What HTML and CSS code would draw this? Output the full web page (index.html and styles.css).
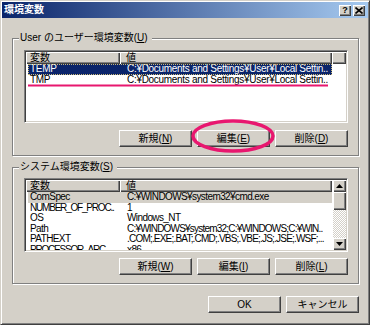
FILE: index.html
```html
<!DOCTYPE html>
<html lang="ja">
<head>
  <meta charset="UTF-8">
  <title>環境変数</title>
  <link rel="stylesheet" href="styles.css">
</head>
<body>
  <div class="window">
    <div class="titlebar">
      <span class="title">環境変数</span>
      <div class="title-btns">
        <span class="tbtn">?</span>
        <span class="tbtn">
          <svg width="8" height="7" viewBox="0 0 8 7"><path d="M0.5 0.5 L7.5 6.5 M7.5 0.5 L0.5 6.5" stroke="#000" stroke-width="1.6"/></svg>
        </span>
      </div>
    </div>

    <div class="dialog">
      <!-- ユーザー環境変数 -->
      <fieldset class="group group-user">
        <legend>User のユーザー環境変数(<u>U</u>)</legend>
        <div class="listview lv-user">
          <div class="lv-main">
            <div class="lv-head">
              <span class="hcol hcol1">変数</span>
              <span class="hcol hcol2">値</span>
              <span class="hcol hfill"></span>
            </div>
            <div class="row selected"><span>TEMP</span><span>C:¥Documents and Settings¥User¥Local Settin..</span></div>
            <div class="row"><span>TMP</span><span>C:¥Documents and Settings¥User¥Local Settin..</span></div>
          </div>
        </div>
        <div class="btn-row">
          <button class="btn">新規(<u>N</u>)</button>
          <button class="btn">編集(<u>E</u>)</button>
          <button class="btn">削除(<u>D</u>)</button>
        </div>
      </fieldset>

      <!-- システム環境変数 -->
      <fieldset class="group group-sys">
        <legend>システム環境変数(<u>S</u>)</legend>
        <div class="listview lv-sys">
          <div class="lv-main">
            <div class="lv-head">
              <span class="hcol hcol1">変数</span>
              <span class="hcol hcol2">値</span>
            </div>
            <div class="row inactive"><span>ComSpec</span><span>C:¥WINDOWS¥system32¥cmd.exe</span></div>
            <div class="row"><span class="tight">NUMBER_OF_PROC..</span><span>1</span></div>
            <div class="row"><span>OS</span><span>Windows_NT</span></div>
            <div class="row"><span>Path</span><span class="caps">C:¥WINDOWS¥system32;C:¥WINDOWS;C:¥WIN..</span></div>
            <div class="row"><span>PATHEXT</span><span class="caps">.COM;.EXE;.BAT;.CMD;.VBS;.VBE;.JS;.JSE;.WSF;...</span></div>
            <div class="row"><span class="tight">PROCESSOR_ARC..</span><span>x86</span></div>
          </div>
          <div class="scrollbar">
            <span class="sb-btn"><svg width="7" height="4" viewBox="0 0 7 4"><polygon points="3.5,0 7,4 0,4" fill="#000"/></svg></span>
            <span class="sb-thumb"></span>
            <span class="sb-track"></span>
            <span class="sb-btn"><svg width="7" height="4" viewBox="0 0 7 4"><polygon points="0,0 7,0 3.5,4" fill="#000"/></svg></span>
          </div>
        </div>
        <div class="btn-row">
          <button class="btn">新規(<u>W</u>)</button>
          <button class="btn">編集(<u>I</u>)</button>
          <button class="btn">削除(<u>L</u>)</button>
        </div>
      </fieldset>

      <div class="footer-btns">
        <button class="btn">OK</button>
        <button class="btn">キャンセル</button>
      </div>
    </div>

    <!-- 注釈の赤い線と丸 -->
    <svg class="annot" width="370" height="325" viewBox="0 0 370 325">
      <path d="M28 85.5 L328 85.5" stroke="#e8176f" stroke-width="2"/>
      <ellipse cx="233" cy="136" rx="40" ry="15" fill="none" stroke="#e8176f" stroke-width="3.5"/>
    </svg>
  </div>
</body>
</html>
```

FILE: styles.css
```css
* {
  margin: 0;
  padding: 0;
  box-sizing: border-box;
}

body {
  font-family: "Liberation Sans", "Noto Sans CJK JP", sans-serif;
  font-size: 10px;
  color: #000;
  background-color: #fff;
}

.window {
  position: relative;
  width: 370px;
  height: 325px;
  padding: 1px;
  background-color: #d4d0c8;
  border: 1px solid;
  border-color: #d4d0c8 #404040 #404040 #d4d0c8;
  box-shadow: inset 1px 1px #fff, inset -1px -1px #808080;
}

.titlebar {
  display: flex;
  align-items: center;
  justify-content: space-between;
  height: 16px;
  padding: 0 3px 0 2px;
  background: linear-gradient(to right, #0a246a, #a6caf0);
}

.title {
  color: #fff;
  font-weight: bold;
  font-size: 10px;
  line-height: 16px;
}

.title-btns {
  display: flex;
  gap: 2px;
}

.tbtn {
  display: flex;
  align-items: center;
  justify-content: center;
  width: 12px;
  height: 11px;
  font-size: 9px;
  font-weight: bold;
  background-color: #d4d0c8;
  box-shadow: inset 1px 1px #fff, inset -1px -1px #404040, inset -2px -2px #808080;
}

.dialog {
  padding: 14px 9px 0 10px;
}

/* グループボックス */
.group {
  border: 1px solid #808080;
  box-shadow: inset 1px 1px #fff, 1px 1px #fff;
  padding: 6px 10px 8px 11px;
}

.group legend {
  margin-left: -5px;
  padding: 0 4px 0 1px;
  line-height: 12px;
  background-color: #d4d0c8;
}

.group-sys {
  margin-top: 5px;
  padding-top: 5px;
}

/* リストビュー */
.listview {
  display: flex;
  height: 73px;
  padding: 1px;
  background-color: #fff;
  border: 1px solid;
  border-color: #808080 #fff #fff #808080;
  box-shadow: inset 1px 1px #404040, inset -1px -1px #d4d0c8;
  overflow: hidden;
}

.lv-sys {
  height: 74px;
}

.lv-main {
  flex: 1;
  min-width: 0;
  overflow: hidden;
}

.lv-head {
  display: flex;
  height: 12px;
}

.hcol {
  height: 12px;
  line-height: 12px;
  padding-left: 4px;
  white-space: nowrap;
  background-color: #d4d0c8;
  box-shadow: inset 1px 1px #fff, inset -1px -1px #404040, inset -2px -2px #808080;
}

.hcol1 {
  width: 94px;
}

.hcol2 {
  width: 212px;
  padding-left: 6px;
}

.hfill {
  flex: 1;
}

.row {
  display: grid;
  grid-template-columns: 92px 212px;
  width: 304px;
  height: 10.5px;
  margin-left: 2px;
  line-height: 10.5px;
}

.row span {
  padding-left: 2px;
  overflow: hidden;
  white-space: nowrap;
  letter-spacing: -0.3px;
}

.row span + span {
  padding-left: 7px;
}

.lv-sys .row span {
  letter-spacing: -0.6px;
}

.lv-sys .row .caps {
  letter-spacing: -0.8px;
}

.lv-sys .row .tight {
  letter-spacing: -1.2px;
}

.row.selected {
  background-color: #0a246a;
  color: #fff;
  outline: 1px dotted #c8b878;
  outline-offset: -1px;
}

.row.inactive {
  background-color: #d4d0c8;
}

/* スクロールバー */
.scrollbar {
  display: flex;
  flex-direction: column;
  width: 13px;
  background: repeating-conic-gradient(#fff 0 25%, #d4d0c8 0 50%) 0 0 / 2px 2px;
}

.sb-btn,
.sb-thumb {
  display: flex;
  align-items: center;
  justify-content: center;
  height: 12px;
  background-color: #d4d0c8;
  box-shadow: inset 1px 1px #fff, inset -1px -1px #404040, inset -2px -2px #808080;
}

.sb-thumb {
  height: 18px;
}

.sb-track {
  flex: 1;
}

/* ボタン */
.btn-row,
.footer-btns {
  display: flex;
  justify-content: flex-end;
  gap: 5px;
  margin-top: 7px;
}

.group-sys .btn-row {
  margin-top: 6px;
}

.footer-btns {
  margin-top: 12px;
}

.btn {
  width: 73px;
  height: 17px;
  padding: 0;
  font: inherit;
  line-height: 15px;
  color: #000;
  background-color: #d4d0c8;
  border: 1px solid;
  border-color: #fff #404040 #404040 #fff;
  box-shadow: inset -1px -1px #808080;
}

.btn u {
  text-underline-offset: 1px;
}

.annot {
  position: absolute;
  left: -1px;
  top: -1px;
  pointer-events: none;
}
```
